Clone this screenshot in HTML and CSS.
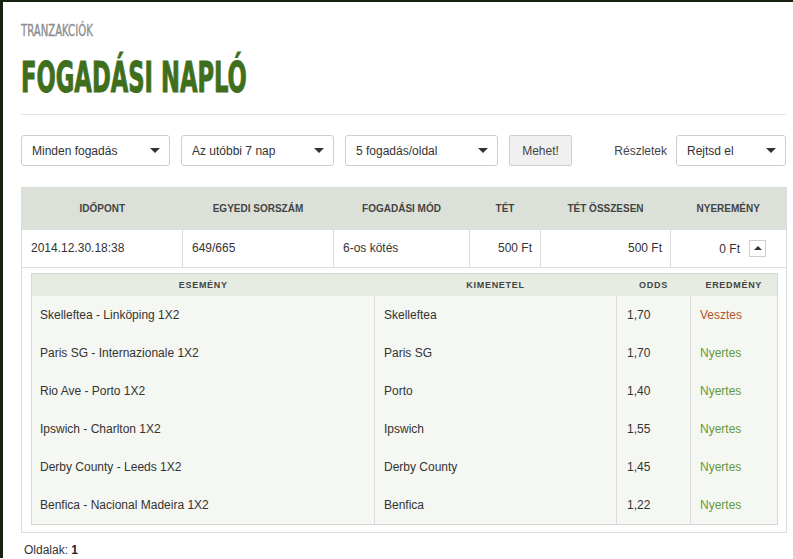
FILE: index.html
```html
<!DOCTYPE html>
<html lang="hu">
<head>
<meta charset="utf-8">
<title>Fogadási napló</title>
<link rel="stylesheet" href="styles.css">
</head>
<body>
<div class="page">
  <div class="crumb"><span class="crumb-text">TRANZAKCIÓK</span></div>
  <h1 class="title"><span class="title-text">FOGADÁSI NAPLÓ</span></h1>
  <hr class="divider">

  <div class="filters">
    <div class="select w149"><span>Minden fogadás</span><i class="caret"></i></div>
    <div class="select w153"><span>Az utóbbi 7 nap</span><i class="caret"></i></div>
    <div class="select w153"><span>5 fogadás/oldal</span><i class="caret"></i></div>
    <div class="btn">Mehet!</div>
    <div class="details">
      <span class="details-label">Részletek</span>
      <div class="select w110"><span>Rejtsd el</span><i class="caret"></i></div>
    </div>
  </div>

  <table class="log">
    <colgroup>
      <col class="c1"><col class="c2"><col class="c3"><col class="c4"><col class="c5"><col class="c6">
    </colgroup>
    <thead>
      <tr>
        <th>IDŐPONT</th>
        <th>EGYEDI SORSZÁM</th>
        <th>FOGADÁSI MÓD</th>
        <th>TÉT</th>
        <th>TÉT ÖSSZESEN</th>
        <th>NYEREMÉNY</th>
      </tr>
    </thead>
    <tbody>
      <tr class="main-row">
        <td>2014.12.30.18:38</td>
        <td>649/665</td>
        <td>6-os kötés</td>
        <td class="num">500 Ft</td>
        <td class="num">500 Ft</td>
        <td class="num win-cell"><span>0 Ft</span><span class="toggle"><i class="up"></i></span></td>
      </tr>
      <tr class="detail-row">
        <td colspan="6">
          <table class="events">
            <colgroup>
              <col class="e1"><col class="e2"><col class="e3"><col class="e4">
            </colgroup>
            <thead>
              <tr>
                <th>ESEMÉNY</th>
                <th>KIMENETEL</th>
                <th>ODDS</th>
                <th>EREDMÉNY</th>
              </tr>
            </thead>
            <tbody>
              <tr><td>Skelleftea - Linköping 1X2</td><td>Skelleftea</td><td>1,70</td><td class="lose">Vesztes</td></tr>
              <tr><td>Paris SG - Internazionale 1X2</td><td>Paris SG</td><td>1,70</td><td class="win">Nyertes</td></tr>
              <tr><td>Rio Ave - Porto 1X2</td><td>Porto</td><td>1,40</td><td class="win">Nyertes</td></tr>
              <tr><td>Ipswich - Charlton 1X2</td><td>Ipswich</td><td>1,55</td><td class="win">Nyertes</td></tr>
              <tr><td>Derby County - Leeds 1X2</td><td>Derby County</td><td>1,45</td><td class="win">Nyertes</td></tr>
              <tr><td>Benfica - Nacional Madeira 1X2</td><td>Benfica</td><td>1,22</td><td class="win">Nyertes</td></tr>
            </tbody>
          </table>
        </td>
      </tr>
    </tbody>
  </table>

  <div class="pages">Oldalak: <b>1</b></div>
</div>
</body>
</html>
```

FILE: styles.css
```css
html, body {
  margin: 0;
  padding: 0;
  background: #fff;
}
body {
  border-top: 2px solid #16220f;
  border-left: 3px solid #16220f;
  min-height: 557px;
  box-sizing: border-box;
  font-family: "Liberation Sans", Arial, sans-serif;
  font-size: 12px;
  color: #333;
}
.page {
  padding: 20px 7px 0 18px;
}
.crumb {
  height: 18px;
  line-height: 18px;
  font-size: 15px;
  white-space: nowrap;
}
.crumb-text {
  display: inline-block;
  font-family: "DejaVu Sans Condensed", sans-serif;
  color: #8a8c8e;
  transform: scaleX(0.75);
  transform-origin: left center;
  -webkit-text-stroke: 0.3px #8a8c8e;
}
.title {
  margin: 14px 0 0 0;
  height: 48px;
  line-height: 48px;
  font-size: 42px;
  font-weight: bold;
  white-space: nowrap;
}
.title-text {
  display: inline-block;
  font-family: "DejaVu Sans Condensed", sans-serif;
  color: #3f6f1d;
  transform: scaleX(0.6);
  transform-origin: left center;
  -webkit-text-stroke: 1px #3f6f1d;
}
.divider {
  margin: 12px 0 0 0;
  border: 0;
  border-top: 1px solid #e4e4e4;
  height: 0;
}
.filters {
  display: flex;
  align-items: center;
  gap: 11px;
  margin-top: 20px;
  height: 31px;
}
.select {
  box-sizing: border-box;
  height: 31px;
  border: 1px solid #cfcfcf;
  border-radius: 3px;
  background: #fff;
  display: flex;
  align-items: center;
  justify-content: space-between;
  padding: 0 9px 0 10px;
  color: #333;
}
.w149 { width: 149px; }
.w153 { width: 153px; }
.w110 { width: 110px; }
.caret {
  width: 0;
  height: 0;
  border-left: 5px solid transparent;
  border-right: 5px solid transparent;
  border-top: 5px solid #333;
}
.btn {
  box-sizing: border-box;
  width: 63px;
  height: 31px;
  border: 1px solid #cfcfcf;
  border-radius: 2px;
  background: #f0f0f0;
  display: flex;
  align-items: center;
  justify-content: center;
  color: #444;
}
.details {
  margin-left: auto;
  display: flex;
  align-items: center;
  gap: 9px;
}
.details-label {
  color: #444;
}

.log {
  margin-top: 21px;
  width: 765px;
  border-collapse: collapse;
  table-layout: fixed;
  border: 1px solid #dcdcdc;
}
.c1 { width: 161px; }
.c2 { width: 151px; }
.c3 { width: 136px; }
.c4 { width: 71px; }
.c5 { width: 130px; }
.c6 { width: 116px; }
.log > thead th {
  height: 42px;
  padding: 0;
  background: #dbe1d8;
  font-size: 10px;
  font-weight: bold;
  color: #444;
  text-align: center;
  box-sizing: border-box;
}
.main-row td {
  height: 38px;
  padding: 0 8px 0 9px;
  border-right: 1px solid #dcdcdc;
  border-bottom: 1px solid #dcdcdc;
  box-sizing: border-box;
  white-space: nowrap;
}
.main-row td.num {
  text-align: right;
}
.win-cell {
  padding-right: 20px !important;
}
.win-cell span:first-child {
  vertical-align: middle;
}
.toggle {
  display: inline-block;
  box-sizing: border-box;
  width: 17px;
  height: 17px;
  margin-left: 9px;
  border: 1px solid #cfcfcf;
  background: #fff;
  vertical-align: middle;
  position: relative;
}
.up {
  position: absolute;
  left: 4px;
  top: 5px;
  width: 0;
  height: 0;
  border-left: 4px solid transparent;
  border-right: 4px solid transparent;
  border-bottom: 4px solid #333;
}
.detail-row > td {
  padding: 5px 8px 7px 9px;
}
.events {
  width: 746px;
  border-collapse: collapse;
  table-layout: fixed;
  border: 1px solid #d8d8d8;
}
.e1 { width: 343px; }
.e2 { width: 242px; }
.e3 { width: 74px; }
.e4 { width: 87px; }
.events th {
  height: 22px;
  padding: 0;
  background: #e6ece2;
  font-size: 9px;
  font-weight: bold;
  letter-spacing: 0.7px;
  color: #444;
  text-align: center;
}
.events td {
  height: 38px;
  padding: 0 8px 0 9px;
  background: #f5f7f2;
  border-right: 1px solid #dcdcdc;
  box-sizing: border-box;
  white-space: nowrap;
}
.events td:first-child { padding-left: 8px; }
.events td:nth-child(3) { padding-left: 10px; }
.events td:last-child { border-right: 0; }
.lose { color: #b3542e; }
.win { color: #66993b; }
.pages {
  margin-top: 10px;
  line-height: 15px;
  padding-left: 3px;
  color: #333;
}
.pages b { color: #222; }
```
